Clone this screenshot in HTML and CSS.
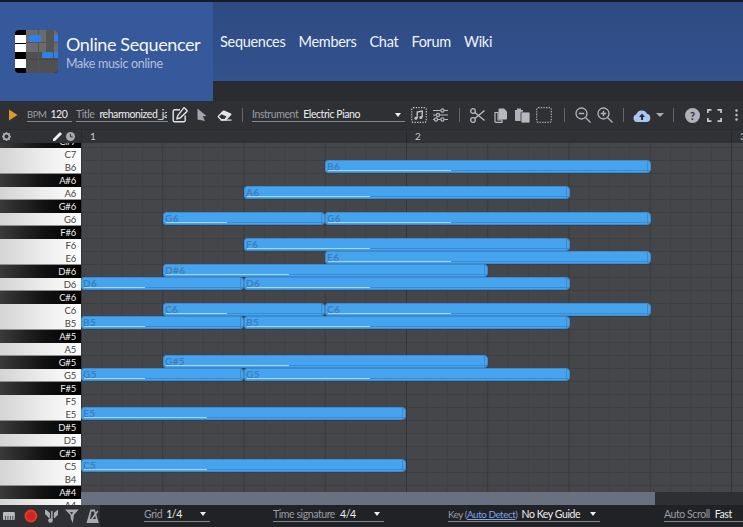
FILE: index.html
```html
<!DOCTYPE html>
<html lang="en">
<head>
<meta charset="utf-8">
<title>Online Sequencer</title>
<link rel="stylesheet" href="styles.css">
</head>
<body>
<div class="strip"></div>
<header class="site">
  <a class="brand">
    <svg class="logo" width="43" height="43" viewBox="0 0 43 43">
      <defs><clipPath id="lc"><rect width="43" height="43" rx="4"/></clipPath></defs>
      <g clip-path="url(#lc)">
        <rect width="43" height="43" fill="#000"/>
        <rect x="0" y="5" width="11" height="8" fill="#fff"/>
        <rect x="0" y="14" width="11" height="8" fill="#fff"/>
        <rect x="0" y="29" width="11" height="9" fill="#fff"/>
        <rect x="11" width="32" height="22" fill="#6b6b6b"/>
        <rect x="11" y="22" width="32" height="21" fill="#505050"/>
        <rect x="11" y="12" width="32" height="1" fill="#555"/>
        <rect x="11" y="29" width="32" height="1" fill="#444"/>
        <rect x="23" y="0" width="1" height="43" fill="#555"/>
        <rect x="31" y="0" width="8" height="22" fill="#555"/>
        <rect x="14" y="5" width="12" height="7" rx="1.5" fill="#2f80ed"/>
        <rect x="27" y="22" width="11" height="6" rx="1.5" fill="#2f80ed"/>
        <rect x="39" y="5" width="4" height="7" fill="#2f80ed"/>
        <rect x="39" y="22" width="4" height="6" fill="#2f80ed"/>
      </g>
    </svg>
    <div class="brand-text">
      <div class="brand-name">Online Sequencer</div>
      <div class="brand-sub">Make music online</div>
    </div>
  </a>
  <div class="site-right">
    <nav class="nav">
      <a>Sequences</a><a>Members</a><a>Chat</a><a>Forum</a><a>Wiki</a>
    </nav>
    <div class="site-under"></div>
  </div>
</header>

<div class="toolbar">
  <svg class="ic play" width="10" height="12" viewBox="0 0 10 12"><path d="M1 0.5 L9.5 6 L1 11.5 Z" fill="#dc9a2e"/></svg>
  <div class="field f-bpm"><span class="lab">BPM</span><span class="val">120</span></div>
  <div class="field f-title"><span class="lab">Title</span><span class="val clip">reharmonized_jazz</span></div>
  <svg class="ic i-edit" width="16" height="16" viewBox="0 0 16 16" fill="none" stroke="#e6e6e8" stroke-width="1.4"><path d="M8 2.800H2.800A1.600 1.600 0 0 0 1.200 4.400v8.800a1.600 1.600 0 0 0 1.600 1.600h8.800a1.600 1.600 0 0 0 1.600-1.600V8.500"/><path d="M12.600 1.100l2.300 2.300a.8.8 0 0 1 0 1.100L8 11l-3 .7.7-3 5.800-7.600a.8.8 0 0 1 1.100 0z"/></svg>
  <svg class="ic i-cur" width="10" height="14" viewBox="0 0 10 14"><path d="M0.500 0.500 L9.500 8 L5.800 8.300 L8 13 L0.500 11.500 Z" fill="#a3a4ad"/></svg>
  <svg class="ic i-era" width="15" height="11" viewBox="0 0 15 11"><path d="M5.500 1 Q6.300.2 7.200.6 L14 3.600 Q15 4.200 14.200 5 L9 10.500 H4 L.8 7.300 Q.2 6.600 .8 6 Z" fill="#e4e4e6"/><path d="M2 6.600 L4.500 4.200 L9.400 6.500 L7.600 9 H4.500 Z" fill="#2f3034"/><rect x="3.500" y="9.500" width="11" height="1.200" fill="#e4e4e6"/></svg>
  <span class="sep s1"></span>
  <div class="field f-inst"><span class="lab">Instrument</span><span class="val">Electric Piano</span><span class="tri"></span></div>
  <svg class="ic i-mus" width="16" height="16" viewBox="0 0 16 16" fill="none"><rect x=".7" y=".7" width="14.600" height="14.600" rx="1.500" stroke="#c4c5cb" stroke-width="1.200" stroke-dasharray="1.300 1.300"/><path d="M6.200 11V5l5-1v6" stroke="#c9cad0" stroke-width="1.300"/><circle cx="4.900" cy="11.200" r="1.500" fill="#c9cad0"/><circle cx="9.900" cy="10.400" r="1.500" fill="#c9cad0"/></svg>
  <svg class="ic i-sli" width="15" height="14" viewBox="0 0 15 14" fill="none" stroke="#b6b7bf" stroke-width="1.200"><path d="M0 2.500h15M0 7h15M0 11.500h15"/><circle cx="9.500" cy="2.500" r="1.600" fill="#2f3034"/><circle cx="5" cy="7" r="1.600" fill="#2f3034"/><circle cx="9.500" cy="11.500" r="1.600" fill="#2f3034"/><circle cx="3" cy="11.500" r="1.600" fill="#2f3034"/></svg>
  <span class="sep s2"></span>
  <svg class="ic i-sci" width="15" height="15" viewBox="0 0 15 15" fill="none" stroke="#b8b9c0" stroke-width="1.300"><circle cx="3" cy="3" r="2.300"/><circle cx="3" cy="12" r="2.300"/><path d="M4.800 4.400 L14.600 12.600 M4.800 10.600 L14.600 2.400"/></svg>
  <svg class="ic i-cop" width="13" height="15" viewBox="0 0 13 15"><path d="M1 4.500 H4 V12 H8 V14.400 H2 Q1 14.400 1 13.400 Z" fill="none" stroke="#b8b9c0" stroke-width="1.200"/><path d="M4.500 1.500 Q4.500.5 5.500.5 H10 L13 3.500 V10.500 Q13 11.500 12 11.500 H5.500 Q4.500 11.500 4.500 10.500 Z" fill="#b8b9c0"/></svg>
  <svg class="ic i-pas" width="15" height="15" viewBox="0 0 15 15"><path d="M0 2 H2 V0.500 H6 V2 H8 V13 H1 Q0 13 0 12 Z" fill="#b0b1b9"/><path d="M6 5 Q6 4 7 4 H14 Q15 4 15 5 V14 Q15 15 14 15 H7 Q6 15 6 14 Z" fill="#b8b9c0" stroke="#2f3034" stroke-width=".8"/></svg>
  <svg class="ic i-sel" width="16" height="16" viewBox="0 0 16 16" fill="none"><rect x=".7" y=".7" width="14.600" height="14.600" rx="1.500" stroke="#b4b5bc" stroke-width="1.200" stroke-dasharray="1.300 1.300"/></svg>
  <span class="sep s3"></span>
  <svg class="ic i-zo" width="16" height="16" viewBox="0 0 16 16" fill="none" stroke="#b4b5bc" stroke-width="1.300"><circle cx="6.500" cy="6.500" r="5.500"/><path d="M10.500 10.500 L15.500 15.500M3.800 6.500h5.400"/></svg>
  <svg class="ic i-zi" width="16" height="16" viewBox="0 0 16 16" fill="none" stroke="#b4b5bc" stroke-width="1.300"><circle cx="6.500" cy="6.500" r="5.500"/><path d="M10.500 10.500 L15.500 15.500M3.800 6.500h5.400M6.500 3.800v5.400"/></svg>
  <span class="sep s4"></span>
  <svg class="ic i-cl" width="18" height="13" viewBox="0 0 18 13"><path d="M4 13 A3.800 3.800 0 0 1 3.200 5.600 A5.800 5.800 0 0 1 14 4.800 A4.200 4.200 0 0 1 14 13 Z" fill="#a7c8f2"/><path d="M9 4.500 L12 8 H10 V11 H8 V8 H6 Z" fill="#2f3034"/></svg>
  <span class="tri t-cl"></span>
  <span class="sep s5"></span>
  <span class="help">?</span>
  <svg class="ic i-fs" width="15" height="13" viewBox="0 0 15 13" fill="none" stroke="#c9cad0" stroke-width="1.700"><path d="M.9 4V.9H4.500M10.500.9H14.100V4M14.100 9V12.100H10.500M4.500 12.100H.9V9"/></svg>
  <svg class="ic i-dot" width="3" height="12" viewBox="0 0 3 12" fill="#c4c5cb"><circle cx="1.500" cy="1.500" r="1.200"/><circle cx="1.500" cy="6" r="1.200"/><circle cx="1.500" cy="10.500" r="1.200"/></svg>
</div>

<div class="ruler">
  <div class="ruler-tools">
    <svg width="9" height="9" viewBox="0 0 10 10" class="r-gear"><circle cx="5" cy="5" r="3.200" fill="none" stroke="#a9aab0" stroke-width="2"/><path d="M5 0v10M0 5h10M1.500 1.500l7 7M8.500 1.500l-7 7" stroke="#a9aab0" stroke-width="1.500" stroke-dasharray="2 6"/></svg>
    <svg width="9" height="9" viewBox="0 0 9 9" class="r-pen"><path d="M0 7 L6.500 .5 Q7 0 7.500 .5 L8.500 1.500 Q9 2 8.500 2.500 L2 9 H0 Z" fill="#f2f2f2"/></svg>
    <svg width="9" height="9" viewBox="0 0 9 9" class="r-clk"><circle cx="4.500" cy="4.500" r="4.500" fill="#a9aab0"/><path d="M4.500 2v2.800h2.200" stroke="#2f3034" fill="none"/></svg>
  </div>
  <div class="ruler-bars"><span class="bar">1</span><span class="bar">2</span><span class="bar">3</span></div>
</div>

<main class="roll">
  <div class="keys">
    <div class="key blk">C#7</div><div class="key wht">C7</div><div class="key wht end">B6</div>
    <div class="key blk">A#6</div><div class="key wht end">A6</div><div class="key blk">G#6</div>
    <div class="key wht end">G6</div><div class="key blk">F#6</div><div class="key wht">F6</div>
    <div class="key wht end">E6</div><div class="key blk">D#6</div><div class="key wht end">D6</div>
    <div class="key blk">C#6</div><div class="key wht">C6</div><div class="key wht end">B5</div>
    <div class="key blk">A#5</div><div class="key wht end">A5</div><div class="key blk">G#5</div>
    <div class="key wht end">G5</div><div class="key blk">F#5</div><div class="key wht">F5</div>
    <div class="key wht end">E5</div><div class="key blk">D#5</div><div class="key wht end">D5</div>
    <div class="key blk">C#5</div><div class="key wht">C5</div><div class="key wht end">B4</div>
    <div class="key blk">A#4</div><div class="key wht end">A4</div>
  </div>
  <div class="canvas-wrap">
    <div class="canvas">
      <div class="note" style="left:244px;top:17px;width:326px">B6</div>
      <div class="note" style="left:163px;top:43px;width:326px">A6</div>
      <div class="note" style="left:82px;top:69px;width:162px">G6</div>
      <div class="note" style="left:244px;top:69px;width:326px">G6</div>
      <div class="note" style="left:163px;top:95px;width:326px">F6</div>
      <div class="note" style="left:244px;top:108px;width:326px">E6</div>
      <div class="note" style="left:82px;top:121px;width:325px">D#6</div>
      <div class="note" style="left:0;top:134px;width:163px">D6</div>
      <div class="note" style="left:163px;top:134px;width:326px">D6</div>
      <div class="note" style="left:82px;top:160px;width:162px">C6</div>
      <div class="note" style="left:244px;top:160px;width:326px">C6</div>
      <div class="note" style="left:0;top:173px;width:163px">B5</div>
      <div class="note" style="left:163px;top:173px;width:326px">B5</div>
      <div class="note" style="left:82px;top:212px;width:325px">G#5</div>
      <div class="note" style="left:0;top:225px;width:163px">G5</div>
      <div class="note" style="left:163px;top:225px;width:326px">G5</div>
      <div class="note" style="left:0;top:264px;width:325px">E5</div>
      <div class="note" style="left:0;top:316px;width:325px">C5</div>
    </div>
    <div class="scroll"><div class="thumb"></div></div>
  </div>
</main>

<footer class="bottom">
  <div class="tools">
    <svg class="b1" width="12" height="8" viewBox="0 0 12 8"><rect width="12" height="8" rx="1" fill="#b9bac0"/><path d="M2.500 4v4M5 4v4M7.500 4v4M10 4v4" stroke="#2f3034" stroke-width=".8"/></svg>
    <svg class="b2" width="14" height="14" viewBox="0 0 14 14"><circle cx="7" cy="7" r="6.500" fill="#e7362a"/><circle cx="7" cy="7" r="4.500" fill="#c92a20"/></svg>
    <svg class="b3" width="14" height="14" viewBox="0 0 14 14" fill="#a9aab2"><path d="M0 1h1.500L5 4v5H4L0 5zM14 1h-1.500L9 4v5h1l4-4z"/><circle cx="5.500" cy="11.500" r="2.300"/><rect x="6.200" y="2" width="1.500" height="9.500"/></svg>
    <svg class="b4" width="14" height="14" viewBox="0 0 14 14"><path d="M0 0.500 H14 L9 6 L8 14 L6 10 L5.500 6 Z" fill="#a9aab2"/><path d="M5 3 H8 L7 5.500 Z" fill="#2f3034"/></svg>
    <svg class="b5" width="14" height="14" viewBox="0 0 14 14"><path d="M4.500 0.500 H9 L13 14 H0.500 Z" fill="#a9aab2"/><path d="M5.500 2.500 H8 L10 10 H4 Z" fill="#2f3034"/><path d="M5 11 L12 2" stroke="#a9aab2" stroke-width="1.500"/></svg>
  </div>
  <div class="field g-grid"><span class="lab">Grid</span><span class="val">1/4</span><span class="tri"></span></div>
  <div class="field g-time"><span class="lab">Time signature</span><span class="val">4/4</span><span class="tri"></span></div>
  <div class="field g-key"><span class="lab">Key (<a class="link">Auto Detect</a>)</span><span class="val">No Key Guide</span><span class="tri"></span></div>
  <div class="field g-auto"><span class="lab">Auto Scroll</span><span class="val">Fast</span></div>
</footer>
</body>
</html>
```
FILE: styles.css
```css
* { box-sizing: border-box; }
html, body { margin: 0; padding: 0; }
body {
  width: 743px; height: 527px; overflow: hidden;
  background: #212226; display: flex; flex-direction: column;
  font-family: "Lato", "Noto Sans", sans-serif; color: #eee;
}
.strip { height: 2px; background: #141a28; flex: none; }

.site { height: 99px; flex: none; display: flex; }
.brand { width: 213px; background: #36599b; display: flex; align-items: center; padding: 0 0 0 15px; gap: 8px; }
.logo { flex: none; }
.brand-text { display: flex; flex-direction: column; margin-top: 2px; }
.brand-name { font-size: 18px; line-height: 22px; letter-spacing: -.38px; color: #f4f6fa; white-space: nowrap; }
.brand-sub { font-size: 12.500px; line-height: 17px; letter-spacing: -.3px; color: #b4c0da; white-space: nowrap; }
.site-right { flex: 1; display: flex; flex-direction: column; }
.nav { height: 79px; background: linear-gradient(#2e4a82, #33528e); display: flex; gap: 13px; padding: 30px 0 0 7px; font-size: 14.500px; line-height: 19px; letter-spacing: -.3px; color: #f0f3f8; }
.site-under { flex: 1; background: #2b2c30; }

.toolbar { height: 29px; flex: none; background: #2f3034; display: flex; align-items: center; border-bottom: 1px solid #2a2b2f; }
.ic { flex: none; display: block; }
.field { display: flex; align-items: center; height: 14px; border-bottom: 1px solid #84858c; font-size: 10.500px; line-height: 13px; letter-spacing: -.42px; flex: none; white-space: nowrap; }
.lab { color: #9b9ca3; }
.val { color: #eeeef0; margin-left: 5px; }
.clip { overflow: hidden; width: 68px; }
.tri { width: 0; height: 0; border-left: 3.500px solid transparent; border-right: 3.500px solid transparent; border-top: 4px solid #eee; flex: none; margin-left: auto; margin-right: 4px; }
.sep { width: 1px; height: 14px; background: #66676d; flex: none; }

.play { margin-left: 8px; }
.f-bpm { margin-left: 9px; width: 45px; }
.f-bpm .lab { font-size: 9.500px; }
.f-bpm .val { margin-left: 4px; }
.f-title { margin-left: 4px; width: 92px; }
.i-edit { margin-left: 4px; }
.i-cur { margin-left: 9px; }
.i-era { margin-left: 10px; }
.s1 { margin-left: 10px; }
.f-inst { margin-left: 9px; width: 153px; }
.i-mus { margin-left: 6px; }
.i-sli { margin-left: 6px; }
.s2 { margin-left: 11px; }
.i-sci { margin-left: 10px; }
.i-cop { margin-left: 9px; }
.i-pas { margin-left: 8px; }
.i-sel { margin-left: 6px; }
.s3 { margin-left: 12px; }
.i-zo { margin-left: 10px; }
.i-zi { margin-left: 6px; }
.s4 { margin-left: 10px; }
.i-cl { margin-left: 9px; }
.toolbar .t-cl { margin: 0 0 0 5px; border-top-color: #a9aab2; border-left-width: 4px; border-right-width: 4px; }
.s5 { margin-left: 9px; }
.help { margin-left: 11px; width: 15px; height: 15px; border-radius: 50%; background: #b0b1b9; color: #2f3034; font-size: 11px; font-weight: 700; line-height: 15px; text-align: center; flex: none; }
.i-fs { margin-left: 7px; }
.i-dot { margin-left: 13px; }

.ruler { height: 13px; flex: none; background: #313236; display: flex; }
.ruler-tools { width: 81px; flex: none; display: flex; align-items: center; }
.r-gear { margin-left: 2px; }
.r-pen { margin-left: 42px; }
.r-clk { margin-left: 4px; }
.ruler-bars { flex: 1; display: flex; overflow: hidden; }
.bar { width: 325px; flex: none; border-left: 1px solid #27282c; padding-left: 8px; font-size: 10px; line-height: 13px; color: #c9cad0; }

.roll { height: 362px; flex: none; display: flex; overflow: hidden; }
.keys { width: 81px; flex: none; display: flex; flex-direction: column; margin-top: -8px; }
.key { height: 13px; flex: none; text-align: right; padding-right: 5px; font-size: 9.500px; line-height: 13px; letter-spacing: -.2px; }
.wht { background: linear-gradient(90deg, #d4d4d4 0%, #ededed 55%, #fff 100%); color: #444; }
.end { border-bottom: 1px solid #8f8f8f; }
.blk { background: linear-gradient(90deg, #3a3a3a 0%, #111 55%, #000 100%); color: #eee; }

.canvas-wrap { flex: 1; display: flex; flex-direction: column; min-width: 0; }
.canvas {
  height: 349px; flex: none; position: relative; overflow: hidden;
  background-color: #454649;
  background-image:
    linear-gradient(90deg, #333438 1px, transparent 1px),
    linear-gradient(90deg, #3a3b3f 1px, transparent 1px),
    linear-gradient(#3e3f43 1px, transparent 1px),
    linear-gradient(90deg, #3f4044 1px, transparent 1px);
  background-size: 325px 100%, 81.25px 100%, 100% 13px, 20.3125px 100%;
  background-position: 0 0, 0 0, 0 4px, 0 0;
}
.note {
  position: absolute; height: 13px; padding-left: 1px;
  background: linear-gradient(270deg, transparent 2px, #3b8ad2 2px, #3b8ad2 3px, transparent 3px) #46a3ee;
  border: 1px solid #3b8ad2; border-radius: 3px 4px 4px 3px;
  font-size: 10px; line-height: 11px; font-weight: 700; color: #3b7fc0; letter-spacing: .4px; white-space: nowrap; overflow: hidden;
}
.note::before { content: ""; position: absolute; left: 2px; right: 0; bottom: 1px; height: 1px; background: #3b8ad2; }
.note::after { content: ""; position: absolute; left: 2px; width: 38%; bottom: 1px; height: 1px; background: #a7d6f8; }
.scroll { height: 13px; flex: none; background: #2e2f33; }
.thumb { width: 574px; height: 100%; background: #697180; }

.bottom { flex: 1; display: flex; align-items: flex-start; background: #212226; }
.tools { width: 100px; height: 22px; flex: none; background: #2f3034; display: flex; align-items: center; }
.b1 { margin-left: 3px; }
.b2 { margin-left: 9px; }
.b3 { margin-left: 7px; }
.b4 { margin-left: 7px; }
.b5 { margin-left: 7px; }
.bottom .field { margin-top: 2px; height: 15px; }
.g-grid { margin-left: 44px; width: 66px; }
.g-grid .val { margin-left: 4px; }
.g-time { margin-left: 63px; width: 111px; }
.g-key { margin-left: 64px; width: 152px; }
.g-key .lab { font-size: 9.800px; }
.g-key .val { margin-left: 4px; }
.g-auto { margin-left: 64px; width: 79px; }
.link { color: #7fa6e6; text-decoration: underline; }
```
